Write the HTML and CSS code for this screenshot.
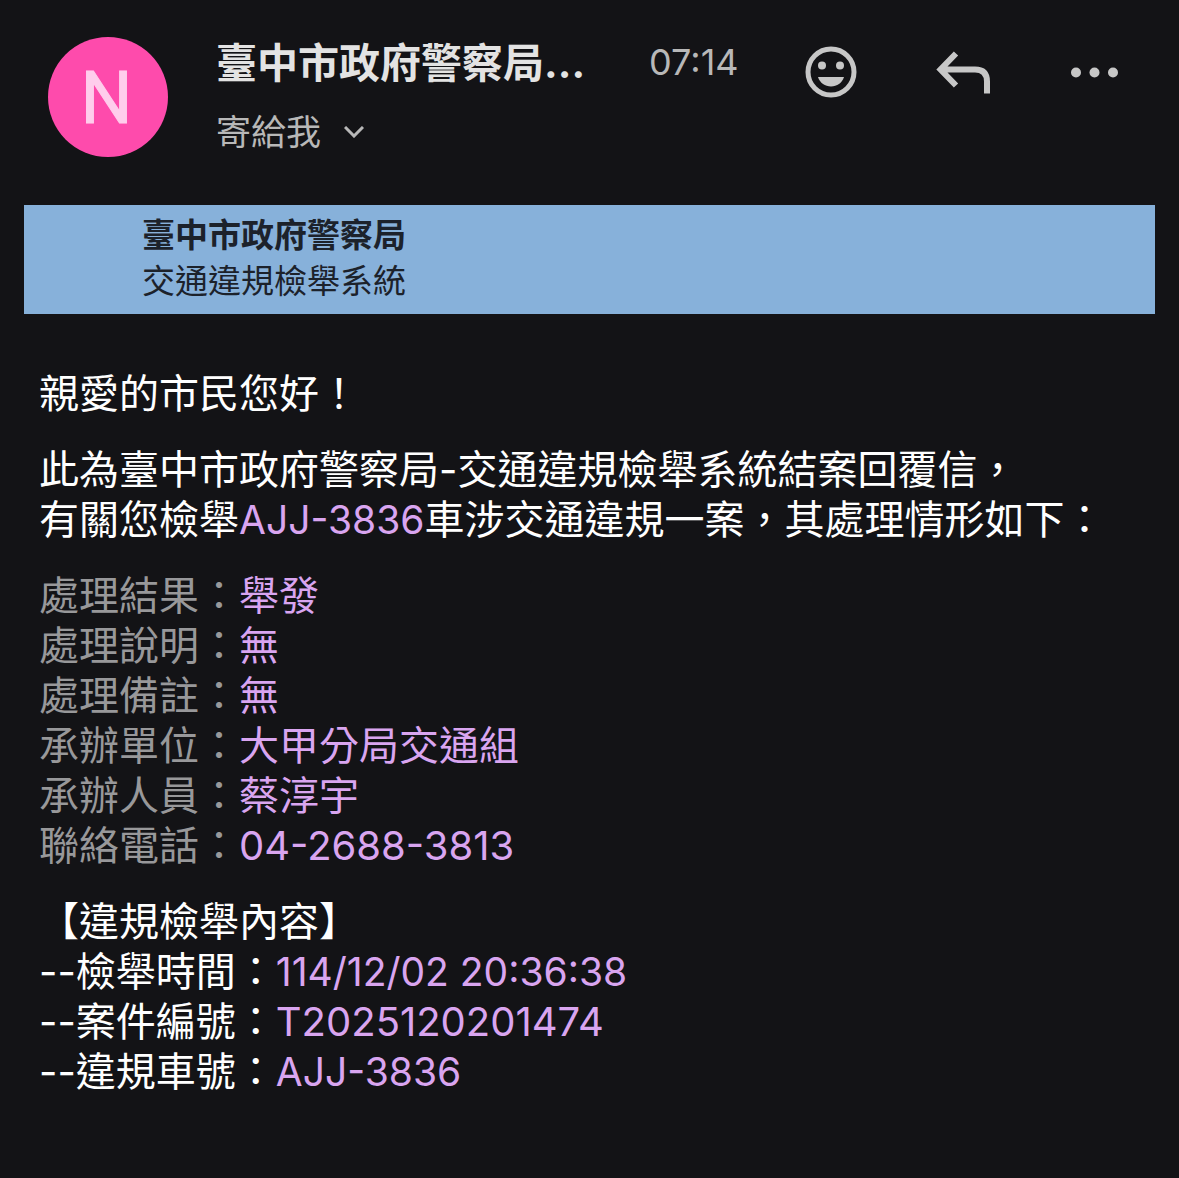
FILE: index.html
```html
<!DOCTYPE html>
<html lang="zh-Hant">
<head>
<meta charset="utf-8">
<meta name="viewport" content="width=device-width, initial-scale=1">
<title>交通違規檢舉系統</title>
<link rel="stylesheet" href="styles.css">
</head>
<body>
<header class="mail-header">
  <div class="avatar">N</div>
  <div class="sender">
    <h1 class="sender-name">臺中市政府警察局...</h1>
    <button class="recipient" type="button">寄給我
      <svg class="chevron" viewBox="0 0 20 12" aria-hidden="true"><path d="M1 1l9 9 9-9"/></svg>
    </button>
  </div>
  <time class="time">07:14</time>
  <div class="actions">
    <button class="action" type="button" aria-label="表情回應">
      <svg viewBox="0 0 56 56" aria-hidden="true"><circle class="line" cx="28" cy="28" r="23"/><circle cx="19" cy="21.500" r="4"/><circle cx="37" cy="21.500" r="4"/><path d="M15 33h26c-2 6-7 9.500-13 9.500s-11-3.500-13-9.500z"/></svg>
    </button>
    <button class="action" type="button" aria-label="回覆">
      <svg viewBox="0 0 56 56" aria-hidden="true"><path class="line reply" d="M21 9.500L5.500 25.500l15.500 16M5.500 25.500h34.500q12 0 12 12v12"/></svg>
    </button>
    <button class="action" type="button" aria-label="更多">
      <svg viewBox="0 0 56 56" aria-hidden="true"><circle cx="9" cy="28.500" r="5"/><circle cx="27.500" cy="28.500" r="5"/><circle cx="46" cy="28.500" r="5"/></svg>
    </button>
  </div>
</header>
<main>
  <div class="banner">
    <strong>臺中市政府警察局</strong>
    <span>交通違規檢舉系統</span>
  </div>
  <article class="letter">
    <p>親愛的市民您好！</p>
    <p>此為臺中市政府警察局-交通違規檢舉系統結案回覆信，<br>有關您檢舉<span class="value code">AJJ-3836</span>車涉交通違規一案，其處理情形如下：</p>
    <dl class="result">
      <div><dt>處理結果：</dt><dd>舉發</dd></div>
      <div><dt>處理說明：</dt><dd>無</dd></div>
      <div><dt>處理備註：</dt><dd>無</dd></div>
      <div><dt>承辦單位：</dt><dd>大甲分局交通組</dd></div>
      <div><dt>承辦人員：</dt><dd>蔡淳宇</dd></div>
      <div><dt>聯絡電話：</dt><dd>04-2688-3813</dd></div>
    </dl>
    <section>
      <h2>【違規檢舉內容】</h2>
      <dl>
        <div><dt>--檢舉時間：</dt><dd class="code">114/12/02 20:36:38</dd></div>
        <div><dt>--案件編號：</dt><dd>T2025120201474</dd></div>
        <div><dt>--違規車號：</dt><dd class="code">AJJ-3836</dd></div>
      </dl>
    </section>
  </article>
</main>
</body>
</html>
```
FILE: styles.css
```css
* { box-sizing: border-box; }
body {
  margin: 0;
  background: #131316;
  color: #fff;
  font-family: Inter, "Noto Sans CJK TC", sans-serif;
  font-size: 40px;
  line-height: 50px;
}
h1, h2, p, dl, dd { margin: 0; }
button { border: 0; padding: 0; background: none; color: inherit; font: inherit; }
.mail-header { display: flex; align-items: flex-start; padding: 37px 56px 48px 48px; }
.avatar {
  flex: none;
  width: 120px;
  height: 120px;
  margin-right: 48px;
  padding-right: 3px;
  border-radius: 50%;
  background: #fe4bac;
  color: #ffcdec;
  font-family: Roboto, sans-serif;
  font-size: 73px;
  font-weight: 400;
  -webkit-text-stroke: 1px currentColor;
  line-height: 122px;
  text-align: center;
}
.sender { flex: none; }
.sender-name { color: #e3e3e3; font-size: 41px; font-weight: 700; line-height: 52px; }
.recipient { display: flex; align-items: center; gap: 23px; margin-top: 18px; color: #b8b8b8; font-size: 35px; }
.chevron { width: 20px; height: 12px; fill: none; stroke: currentColor; stroke-width: 3; }
.time { margin-left: 64px; color: #b8b8b8; font-size: 36px; line-height: 50px; }
.actions { display: flex; gap: 76px; margin: 7px 0 0 auto; color: #c7c7c7; }
.action { width: 56px; height: 56px; }
.action svg { display: block; width: 56px; height: 56px; fill: currentColor; }
.action .line { fill: none; stroke: currentColor; stroke-width: 5; }
.action .reply { stroke-width: 6; }
.banner {
  display: flex;
  flex-direction: column;
  margin: 0 24px;
  padding: 7px 118px 10px;
  background: #87b1da;
  color: #1c222b;
  font-size: 33px;
  line-height: 46px;
}
.letter { display: grid; gap: 26px; padding: 55px 39px; }
dl div { display: flex; }
.result dt { color: #98989a; }
.value, dd { color: #d9a5f0; }
.code { font-size: 39px; }
h2 { font-size: 40px; font-weight: 400; line-height: 50px; }
```
